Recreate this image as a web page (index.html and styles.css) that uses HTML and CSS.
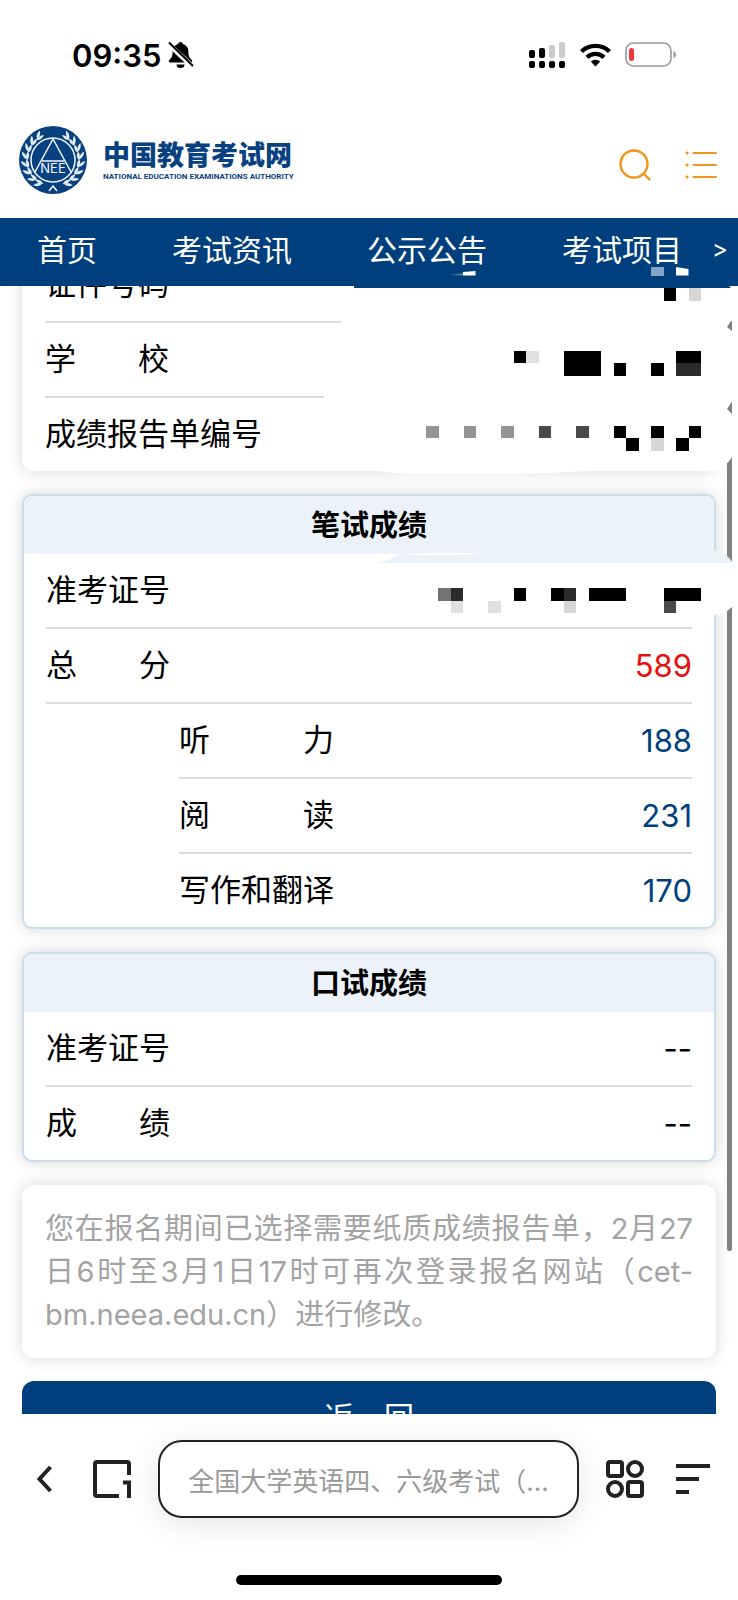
FILE: index.html
```html
<!DOCTYPE html>
<html lang="zh-CN">
<head>
    <meta charset="UTF-8">
    <meta name="viewport" content="width=device-width, initial-scale=1.0">
    <title>全国大学英语四、六级考试（CET）成绩查询</title>
    <link rel="stylesheet" href="styles.css">
</head>
<body>
    <div class="status-bar">
        <div class="status-left">
            <span class="time">09:35</span>
            <svg width="26" height="28" viewBox="0 0 26 28">
                <path d="M12.500 1c-1.400 0-2.200.8-2.400 1.900C6.300 4 4.600 7 4.600 10.500c0 5-1.200 6.500-3.300 8.600-1 1-.6 2.400.9 2.400h20.600c1.500 0 1.900-1.400.9-2.400-2.100-2.100-3.300-3.600-3.300-8.600 0-3.500-1.700-6.500-5.500-7.600C14.700 1.800 13.900 1 12.500 1zM8.500 23.500a4 3.500 0 0 0 8 0z"/>
                <path d="M0 2.500l25 23.500" stroke="#fff" stroke-width="5"/>
                <path d="M1 1.500l24 23.500" stroke="#000" stroke-width="2"/>
            </svg>
        </div>
        <div class="status-right">
            <svg width="37" height="27" viewBox="0 0 37 27">
                <rect x="0" y="8" width="6" height="8" rx="2"/>
                <rect x="10" y="6" width="6" height="10" rx="2"/>
                <rect x="20" y="3" width="6" height="13" rx="2" fill="#ccc"/>
                <rect x="30" y="0" width="6" height="16" rx="2" fill="#ccc"/>
                <rect x="0" y="19" width="6" height="7" rx="2"/>
                <rect x="10" y="19" width="6" height="7" rx="2"/>
                <rect x="20" y="19" width="6" height="7" rx="2"/>
                <rect x="30" y="19" width="6" height="7" rx="2"/>
            </svg>
            <svg width="31" height="24" viewBox="0 0 31 24" fill="none" stroke="#000" stroke-width="4.300">
                <path d="M1.500 8.500a20 20 0 0 1 28 0"/>
                <path d="M7 14.300a12.500 12.500 0 0 1 17 0"/>
                <path d="M10.800 18.600a7 7 0 0 1 9.400 0L15.500 23.500z" fill="#000" stroke="none"/>
            </svg>
            <svg width="52" height="26" viewBox="0 0 52 26">
                <rect x="1" y="1" width="45" height="23" rx="7.500" fill="none" stroke="#999" stroke-width="1.600"/>
                <rect x="4" y="6" width="5" height="13" rx="2.500" fill="#f0383a"/>
                <path d="M48.500 9c3.300 1 3.300 6.200 0 7.200z" fill="#999"/>
            </svg>
        </div>
    </div>

    <header class="site-header">
        <a class="logo" href="#">
            <svg width="68" height="68" viewBox="-34 -34 68 68">
                <defs>
                    <g id="leaf">
                        <path d="M-26-1q-5-2-5-8q5 3 5 8z"/>
                        <path d="M-26 0q-2-5 1-9q3 5-1 9z"/>
                    </g>
                    <g id="branch" fill="#e4eef8">
                        <use href="#leaf" transform="rotate(50)"/>
                        <use href="#leaf" transform="rotate(33)"/>
                        <use href="#leaf" transform="rotate(16)"/>
                        <use href="#leaf" transform="rotate(-1)"/>
                        <use href="#leaf" transform="rotate(-18)"/>
                        <use href="#leaf" transform="rotate(-35)"/>
                        <use href="#leaf" transform="rotate(-52)"/>
                        <use href="#leaf" transform="rotate(-68)"/>
                    </g>
                </defs>
                <circle r="34" fill="#08417f"/>
                <use href="#branch"/>
                <use href="#branch" transform="scale(-1 1)"/>
                <g fill="none" stroke="#f0f6fc" stroke-width="1.500">
                    <circle r="22"/>
                    <path d="M-18 12L0-21L18 12M-11 1H11M-4 31L0 26L4 31"/>
                </g>
                <text class="emblem-text" x="0" y="13" text-anchor="middle">NEE</text>
            </svg>
            <span class="logo-text">
                <strong>中国教育考试网</strong>
                <small>NATIONAL EDUCATION EXAMINATIONS AUTHORITY</small>
            </span>
        </a>
        <div class="header-actions">
            <button type="button" aria-label="搜索">
                <svg width="32" height="32" viewBox="0 0 32 32" fill="none" stroke="#f0961e" stroke-width="2.400" stroke-linecap="round">
                    <circle cx="15" cy="15" r="13.500"/>
                    <path d="M24.500 24.500l6 6"/>
                </svg>
            </button>
            <button type="button" aria-label="菜单">
                <svg width="32" height="32" viewBox="0 0 32 32" fill="none" stroke="#f0961e" stroke-width="2" stroke-linecap="round">
                    <path d="M8.500 4H31M8.500 16H31M8.500 28H31"/>
                    <path d="M2 4h.1M2 16h.1M2 28h.1" stroke-width="3"/>
                </svg>
            </button>
        </div>
    </header>

    <nav class="site-nav">
        <div class="nav-links">
            <a href="#">首页</a>
            <a href="#">考试资讯</a>
            <a href="#">公示公告</a>
            <a href="#">考试项目</a>
        </div>
        <a class="more" href="#">&gt;</a>
    </nav>

    <main>
        <div class="content">
            <dl class="card info">
                <div class="row"><dt>证件号码</dt><dd></dd></div>
                <div class="row"><dt>学　　校</dt><dd></dd></div>
                <div class="row"><dt>成绩报告单编号</dt><dd></dd></div>
            </dl>

            <section class="card score">
                <h2>笔试成绩</h2>
                <dl>
                    <div class="row"><dt>准考证号</dt><dd></dd></div>
                    <div class="row"><dt>总　　分</dt><dd class="total">589</dd></div>
                    <div class="row sub"><dt>听　　　力</dt><dd>188</dd></div>
                    <div class="row sub"><dt>阅　　　读</dt><dd>231</dd></div>
                    <div class="row sub"><dt>写作和翻译</dt><dd>170</dd></div>
                </dl>
            </section>

            <section class="card score">
                <h2>口试成绩</h2>
                <dl>
                    <div class="row"><dt>准考证号</dt><dd class="none">--</dd></div>
                    <div class="row"><dt>成　　绩</dt><dd class="none">--</dd></div>
                </dl>
            </section>

            <p class="card note">您在报名期间已选择需要纸质成绩报告单，2月27日6时至3月1日17时可再次登录报名网站（cet-bm.neea.edu.cn）进行修改。</p>

            <button class="back-btn" type="button">返　回</button>
        </div>
        <div class="scrollbar"></div>

        <!-- 个人信息打码 -->
        <svg class="mosaic" width="420" height="360" viewBox="318 260 420 360">
            <path fill="#003f7d" d="M354 285h374l3 3H354z"/>
            <path fill="#fff" d="M354 288H728Q734 300 733 318L727 327L733 332V400L727 409L733 415V455Q725 471 705 471H590Q540 474 490 474H420Q390 474 375 470H345Q322 440 324 396L341 323z"/>
            <path fill="#ecf2f9" d="M376 563Q390 561 400 554H714V550Q727 553 733 563z"/>
            <path fill="#fff" d="M400 555Q440 551 487 554Q440 555 400 555z"/>
            <path fill="#fff" d="M376 563H733Q742 585 733 606Q725 615 712 615H376z"/>
            <path fill="#fff" d="M463 272l12.500-1v4.500H463zM676 267l12.500 2v6.500H676z"/>
            <path fill="#4f7aa8" d="M450 275l13-2v2.500z"/>
            <g shape-rendering="crispEdges">
                <path fill="#86a4c8" d="M651 267h12.500v8.500H651z"/>
                <path fill="#000" d="M663.500 288H676v12.500h-12.500zM513.500 350.500H526V363h-12.500zM563.500 350.500H601v25h-37.500zM613.500 363H626v12.500h-12.500zM651 363h12.500v12.500H651zM676 350.500h25V363h-25z"/>
                <path fill="#000" d="M613.500 425.500H626V438h-12.500zM651 425.500h12.500V438H651zM688.500 425.500H701V438h-12.500zM626 438h12.500v12.500H626zM676 438h12.500v12.500H676z"/>
                <path fill="#000" d="M513.500 588H526v12.500h-12.500zM551 588h12.500v12.500H551zM588.500 588H626v12.500h-37.500zM663.500 588H701v12.500h-37.500z"/>
                <path fill="#2b2b2b" d="M676 363h25v12.500h-25zM450.500 588H463v12.500h-12.500zM563.500 588H576v12.500h-12.500z"/>
                <path fill="#4a4a4a" d="M538.500 425.500H551V438h-12.500zM576 425.500h12.500V438H576zM663.500 600.500H676V613h-12.500z"/>
                <path fill="#737373" d="M438 588h12.500v12.500H438z"/>
                <path fill="#949494" d="M426 425.500h12.500V438H426zM463.500 425.500H476V438h-12.500zM501 425.500h12.500V438H501z"/>
                <path fill="#d6d6d6" d="M688.500 288H701v12.500h-12.500zM651 438h12.500v12.500H651zM563.500 600.500H576V613h-12.500z"/>
                <path fill="#e0e0e0" d="M526 350.500h12.500V363H526zM450.500 600.500H463V613h-12.500zM488 600.500h12.500V613H488z"/>
            </g>
        </svg>
    </main>

    <footer class="browser-bar">
        <div class="toolbar">
            <button class="go-back" type="button" aria-label="后退">
                <svg width="15" height="28" viewBox="0 0 15 28" fill="none" stroke="#222" stroke-width="4">
                    <path d="M13.500 2L2.500 14L13.500 26"/>
                </svg>
            </button>
            <button type="button" aria-label="标签页">
                <svg width="38" height="38" viewBox="0 0 38 38" fill="none" stroke="#222" stroke-width="4">
                    <path d="M36 15V4q0-2-2-2H4Q2 2 2 4V34q0 2 2 2H26"/>
                    <path d="M30 22.500h6V38"/>
                </svg>
            </button>
            <input class="address" type="text" aria-label="地址栏" value="全国大学英语四、六级考试（..." readonly>
            <button type="button" aria-label="应用">
                <svg width="38" height="38" viewBox="0 0 38 38" fill="none" stroke="#222" stroke-width="4">
                    <rect x="2" y="2" width="14" height="14" rx="2"/>
                    <circle cx="29" cy="9" r="7"/>
                    <circle cx="9" cy="29" r="7"/>
                    <rect x="22" y="22" width="14" height="14" rx="2"/>
                </svg>
            </button>
            <button class="more-menu" type="button" aria-label="更多">
                <svg width="34" height="32" viewBox="0 0 34 32" stroke="#222" stroke-width="4">
                    <path d="M0 3H34M0 16H23M0 29H13"/>
                </svg>
            </button>
        </div>
        <div class="home-indicator"></div>
    </footer>
</body>
</html>
```

FILE: styles.css
```css
* {
    box-sizing: border-box;
}
body {
    margin: 0;
    height: 100vh;
    display: flex;
    flex-direction: column;
    overflow: hidden;
    background-color: #fff;
    color: #000;
    font-family: Inter, "Noto Sans CJK SC", sans-serif;
    font-size: 31px;
}
a {
    color: inherit;
    text-decoration: none;
}
button {
    padding: 0;
    border: none;
    background: none;
    font-family: inherit;
    cursor: pointer;
}
svg {
    display: block;
}
dl, dd, h2, p {
    margin: 0;
}

.status-bar {
    flex: none;
    height: 110px;
    padding: 0 61px 0 72px;
    display: flex;
    justify-content: space-between;
    align-items: center;
}
.status-left, .status-right {
    display: flex;
    align-items: center;
}
.status-left {
    gap: 7px;
}
.status-right {
    gap: 14px;
}
.time {
    font-size: 31px;
    font-weight: 600;
}

.site-header {
    flex: none;
    height: 108px;
    padding: 0 21px 8px 19px;
    display: flex;
    justify-content: space-between;
    align-items: center;
}
.logo {
    display: flex;
    align-items: center;
    gap: 16px;
    color: #08417f;
}
.emblem-text {
    fill: #f0f6fc;
    font-size: 13px;
}
.logo-text {
    padding-top: 4px;
    display: flex;
    flex-direction: column;
}
.logo-text strong {
    font-size: 27px;
    line-height: 30px;
    font-weight: 900;
}
.logo-text small {
    font-family: Roboto, sans-serif;
    font-size: 8px;
    line-height: 12px;
    font-weight: 700;
}
.header-actions {
    display: flex;
    gap: 34px;
    padding-top: 10px;
}

.site-nav {
    flex: none;
    height: 68px;
    padding: 0 10px 8px 37px;
    display: flex;
    justify-content: space-between;
    align-items: center;
    background-color: #003f7d;
    color: #fff;
    font-size: 30px;
    white-space: nowrap;
}
.nav-links {
    display: flex;
    gap: 75px;
}
.site-nav .more {
    font-size: 24px;
}

main {
    flex: 1;
    min-height: 0;
    position: relative;
}
.content {
    height: 100%;
    padding: 0 22px;
    display: flex;
    flex-direction: column;
    gap: 23px;
    overflow: hidden;
}
.card {
    flex: none;
    border-radius: 12px;
    background-color: #fff;
    box-shadow: 0 0 16px rgba(0, 0, 0, 0.16);
}
.row {
    height: 75px;
    display: flex;
    justify-content: space-between;
    align-items: center;
    border-bottom: 2px solid #dcdcdc;
}
.row:last-child {
    height: 73px;
    border-bottom: none;
}
.row dt {
    padding-bottom: 6px;
}
.info {
    margin-top: -38px;
    padding: 0 23px;
}
.score {
    border: 2px solid #c9deeb;
    border-radius: 10px;
    overflow: hidden;
}
.score h2 {
    height: 58px;
    line-height: 60px;
    background-color: #ecf2f9;
    font-size: 29px;
    font-weight: 700;
    text-align: center;
}
.score dl {
    padding: 0 22px;
}
.score dd {
    color: #003f7d;
}
.score .total {
    color: #e60f0f;
}
.score .none {
    color: #000;
}
.sub {
    margin-left: 133px;
}
.note {
    padding: 22px 23px;
    color: #a3a3a3;
    font-size: 29px;
    line-height: 43px;
    text-align: justify;
}
.back-btn {
    flex: none;
    height: 75px;
    padding-bottom: 8px;
    border-radius: 12px;
    background-color: #003f7d;
    color: #fff;
    font-size: 30px;
}
.scrollbar {
    position: absolute;
    top: 34px;
    right: 6px;
    bottom: 163px;
    width: 5px;
    border-radius: 3px;
    background-color: #808080;
}
.mosaic {
    position: absolute;
    top: -26px;
    right: 0;
}

.browser-bar {
    flex: none;
    height: 186px;
    padding: 26px 0 15px;
    display: flex;
    flex-direction: column;
    justify-content: space-between;
    align-items: center;
    background-color: #fff;
    position: relative;
}
.toolbar {
    width: 100%;
    padding: 0 28px 0 37px;
    display: flex;
    align-items: center;
    gap: 27px;
}
.go-back {
    margin-right: 14px;
}
.more-menu {
    margin-left: 5px;
}
.address {
    flex: 1;
    min-width: 0;
    height: 78px;
    padding: 0 20px;
    border: 2px solid #222;
    border-radius: 24px;
    background-color: #fff;
    box-shadow: 0 6px 32px rgba(0, 0, 0, 0.1);
    color: #999;
    font-family: inherit;
    font-size: 26px;
    text-align: center;
    outline: none;
}
.home-indicator {
    width: 36%;
    height: 10px;
    border-radius: 5px;
    background-color: #000;
}
```
